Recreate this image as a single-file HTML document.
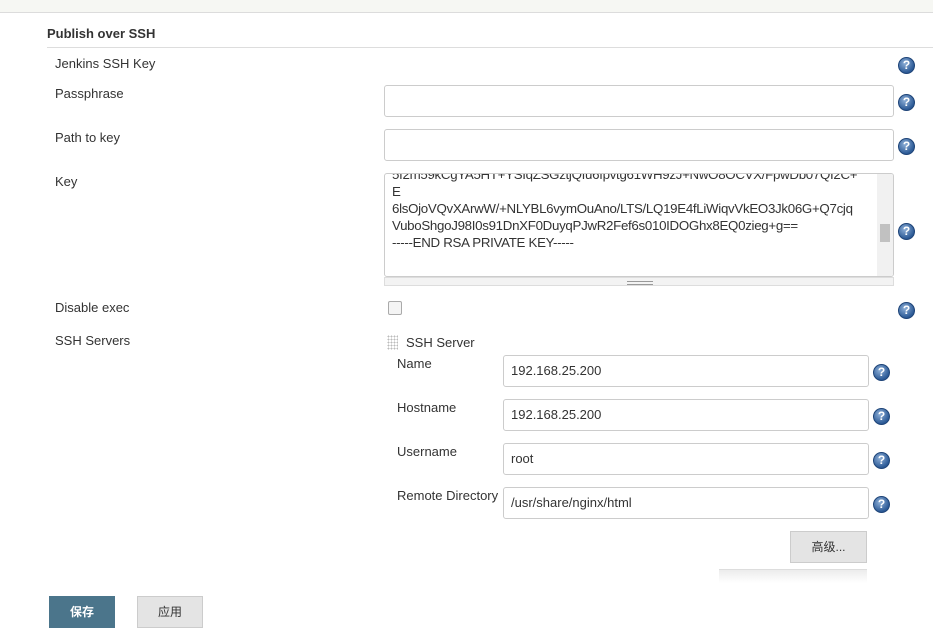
<!DOCTYPE html>
<html><head><meta charset="utf-8"><style>
body{margin:0;width:933px;height:635px;background:#fff;position:relative;overflow:hidden;font-family:"Liberation Sans","Noto Sans CJK SC",sans-serif;font-size:13px;color:#333}
.a{position:absolute}
.in{position:absolute;border:1px solid #ccc;border-radius:3px;background:#fff;box-sizing:border-box;font-size:13px;padding-left:7px;line-height:30px;color:#333}
.h{position:absolute;width:17px;height:17px;border-radius:50%;background:radial-gradient(circle at 40% 35%,#8fb0d8,#2c5a96 70%);border:1px solid #1e4478;box-sizing:border-box;color:#fff;font:bold 12px/15px "Liberation Sans",sans-serif;text-align:center}
.btn{position:absolute;background:#e4e4e4;border:1px solid #ccc;box-sizing:border-box;text-align:center;line-height:30px;font-size:12px}
</style></head><body>
<div class="a" style="left:0;top:0;width:933px;height:12px;background:#f6f7f3;border-bottom:1px solid #dcdcdc"></div>
<div class="a" style="left:47px;top:26px;font-weight:bold">Publish over SSH</div>
<div class="a" style="left:47px;top:47px;width:886px;height:1px;background:#ddd"></div>
<div class="a" style="left:55px;top:56px">Jenkins SSH Key</div>
<div class="a" style="left:55px;top:86px">Passphrase</div>
<div class="a" style="left:55px;top:130px">Path to key</div>
<div class="a" style="left:55px;top:174px">Key</div>
<div class="a" style="left:55px;top:300px">Disable exec</div>
<div class="a" style="left:55px;top:333px">SSH Servers</div>
<div class="h" style="left:898px;top:57px">?</div>
<div class="h" style="left:898px;top:94px">?</div>
<div class="h" style="left:898px;top:138px">?</div>
<div class="h" style="left:898px;top:223px">?</div>
<div class="h" style="left:898px;top:302px">?</div>
<div class="in" style="left:384px;top:85px;width:510px;height:32px"></div>
<div class="in" style="left:384px;top:129px;width:510px;height:32px"></div>
<div class="in" style="left:384px;top:173px;width:510px;height:104px;line-height:17px;padding-left:7px;overflow:hidden;font-size:13.3px;letter-spacing:-0.3px">
<div style="margin-top:-8px">5f2m59kCgYA5HT+YSIqZSGztjQIu6fpvtg61WH9zJ+NwO8OCVX/FpwDb07QI2C+</div><div>E</div><div>6lsOjoVQvXArwW/+NLYBL6vymOuAno/LTS/LQ19E4fLiWiqvVkEO3Jk06G+Q7cjq</div><div>VuboShgoJ98I0s91DnXF0DuyqPJwR2Fef6s010IDOGhx8EQ0zieg+g==</div><div>-----END RSA PRIVATE KEY-----</div>
<div class="a" style="right:0;top:0;width:16px;height:103px;background:#f1f1f1"><div class="a" style="left:3px;top:50px;width:10px;height:18px;background:#c1c1c1"></div></div>
</div>
<div class="a" style="left:384px;top:277px;width:510px;height:9px;background:#f3f3f3;border:1px solid #ddd;box-sizing:border-box"><div class="a" style="left:242px;top:3px;width:26px;height:2px;border-top:1px solid #999;border-bottom:1px solid #999"></div></div>
<div class="a" style="left:388px;top:301px;width:12px;height:12px;border:1px solid #aaa;border-radius:2px;background:#f4f4f4"></div>
<div class="a" style="left:387px;top:335px;width:11px;height:15px;background-image:radial-gradient(#bbb 40%,transparent 41%);background-size:3px 3px"></div>
<div class="a" style="left:406px;top:335px">SSH Server</div>
<div class="a" style="left:397px;top:356px">Name</div>
<div class="a" style="left:397px;top:400px">Hostname</div>
<div class="a" style="left:397px;top:444px">Username</div>
<div class="a" style="left:397px;top:488px">Remote Directory</div>
<div class="in" style="left:503px;top:355px;width:366px;height:32px">192.168.25.200</div>
<div class="in" style="left:503px;top:399px;width:366px;height:32px">192.168.25.200</div>
<div class="in" style="left:503px;top:443px;width:366px;height:32px">root</div>
<div class="in" style="left:503px;top:487px;width:366px;height:32px">/usr/share/nginx/html</div>
<div class="h" style="left:873px;top:364px">?</div>
<div class="h" style="left:873px;top:408px">?</div>
<div class="h" style="left:873px;top:452px">?</div>
<div class="h" style="left:873px;top:496px">?</div>
<div class="btn" style="left:790px;top:531px;width:77px;height:32px">高级...</div>
<div class="a" style="left:719px;top:569px;width:148px;height:13px;background:linear-gradient(#ececec,#fff);border-top:1px solid #ddd"></div>
<div class="btn" style="left:49px;top:596px;width:66px;height:32px;background:#4b758b;border-color:#4b758b;color:#fff;font-weight:bold">保存</div>
<div class="btn" style="left:137px;top:596px;width:66px;height:32px">应用</div>
</body></html>
